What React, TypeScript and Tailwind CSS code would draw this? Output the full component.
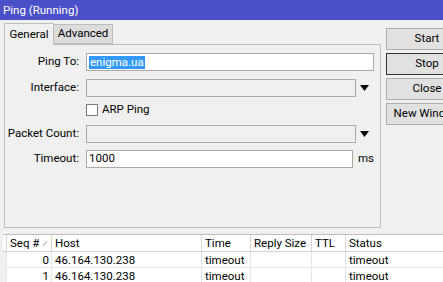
import React from 'react';

const font = { fontFamily: 'Roboto, "Liberation Sans", Arial, sans-serif' };

function Field({ label, width, white, arrow, value, selected, suffix }: {
  label: string; width: number; white?: boolean; arrow?: boolean; value?: string; selected?: boolean; suffix?: string;
}) {
  return (
    <div className="flex items-center h-[18px]">
      <div className="w-[75px] text-right pr-[1px] text-[11.5px] text-black whitespace-nowrap">{label}</div>
      <div
        className={`ml-[6px] h-[18px] border border-[#a9a9a9] flex items-center px-[2px] text-[11.5px] ${white ? 'bg-white' : 'bg-[#f0f0f0]'}`}
        style={{ width }}
      >
        {value && (
          <span className={selected ? 'bg-[#3399ff] text-white px-[1px] leading-[13px]' : 'text-black'}>{value}</span>
        )}
      </div>
      {arrow && (
        <svg width="9" height="6" viewBox="0 0 9 6" className="ml-[4px]">
          <path d="M0 0 H9 L4.5 6 Z" fill="#000" />
        </svg>
      )}
      {suffix && <span className="ml-[5px] text-[11.5px] text-black">{suffix}</span>}
    </div>
  );
}

function Btn({ label, focused }: { label: string; focused?: boolean }) {
  return (
    <div
      className={`w-[82px] h-[22px] shrink-0 flex items-center justify-center text-[11.5px] text-black bg-[#e1e1e1] border ${focused ? 'border-[#333333]' : 'border-[#adadad]'}`}
    >
      <span className="whitespace-nowrap">{label}</span>
    </div>
  );
}

const cols = [
  { name: '', w: 4 },
  { name: 'Seq #', w: 45 },
  { name: 'Host', w: 150 },
  { name: 'Time', w: 49 },
  { name: 'Reply Size', w: 61 },
  { name: 'TTL', w: 34 },
  { name: 'Status', w: 100 },
];

const rows = [
  ['', '0', '46.164.130.238', 'timeout', '', '', 'timeout'],
  ['', '1', '46.164.130.238', 'timeout', '', '', 'timeout'],
];

export default function App() {
  return (
    <div className="w-[443px] h-[282px] bg-[#f0f0f0] overflow-hidden flex flex-col select-none" style={font}>
      <div className="h-[20px] bg-[#4a50c8] text-white text-[11.5px] leading-[20px] pl-[3px] shrink-0">Ping (Running)</div>

      <div className="flex shrink-0 overflow-hidden">
        <div className="ml-[4px] mt-[2px] flex flex-col shrink-0">
          <div className="flex h-[22px] items-end">
            <div className="h-[22px] w-[50px] border border-b-0 border-[#bdbdbd] bg-[#f0f0f0] text-[11.5px] text-black flex items-center justify-center relative top-[1px] z-10">
              General
            </div>
            <div className="h-[20px] w-[59px] border border-l-0 border-[#bdbdbd] bg-[#dcdcdc] text-[11.5px] text-black flex items-center justify-center">
              Advanced
            </div>
          </div>
          <div className="w-[377px] h-[184px] border border-[#bdbdbd] flex flex-col">
            <div className="mt-[8px]">
              <Field label="Ping To:" width={288} white value="enigma.ua" selected />
            </div>
            <div className="mt-[8px]">
              <Field label="Interface:" width={270} arrow />
            </div>
            <div className="mt-[6px] flex items-center h-[14px] pl-[81px]">
              <div className="w-[12px] h-[12px] border border-[#7a7a7a] bg-white" />
              <span className="ml-[4px] text-[11.5px] text-black">ARP Ping</span>
            </div>
            <div className="mt-[8px]">
              <Field label="Packet Count:" width={270} arrow />
            </div>
            <div className="mt-[7px]">
              <Field label="Timeout:" width={267} white value="1000" suffix="ms" />
            </div>
          </div>
        </div>

        <div className="ml-[5px] mt-[8px] flex flex-col gap-[3px] shrink-0">
          <Btn label="Start" />
          <Btn label="Stop" focused />
          <Btn label="Close" />
          <Btn label="New Window" />
        </div>
      </div>

      <div className="mt-[6px] ml-[3px] border-t border-[#bdbdbd] flex-1">
        <div className="flex h-[17px] bg-white border-b border-[#d5d5d5]">
          {cols.map((c, i) => (
            <div
              key={i}
              className="shrink-0 border-r border-[#d5d5d5] text-[11.5px] text-black pl-[3px] leading-[17px] whitespace-nowrap flex items-center"
              style={{ width: c.w }}
            >
              {c.name}
              {c.name === 'Seq #' && (
                <svg width="6" height="6" viewBox="0 0 6 6" className="ml-[3px]">
                  <path d="M1 6 L5 1" stroke="#a0a0a0" strokeWidth="1" />
                </svg>
              )}
            </div>
          ))}
        </div>
        {rows.map((r, ri) => (
          <div key={ri} className="flex h-[16px] bg-white border-b border-[#e6e6e6]">
            {r.map((v, ci) => (
              <div
                key={ci}
                className={`shrink-0 border-r border-[#e6e6e6] text-[11.5px] text-black leading-[16px] whitespace-nowrap ${ci === 1 ? 'text-right pr-[2px]' : 'pl-[3px]'} ${ci === 0 ? 'bg-[#f0f0f0]' : ''}`}
                style={{ width: cols[ci].w }}
              >
                {v}
              </div>
            ))}
          </div>
        ))}
      </div>
    </div>
  );
}
